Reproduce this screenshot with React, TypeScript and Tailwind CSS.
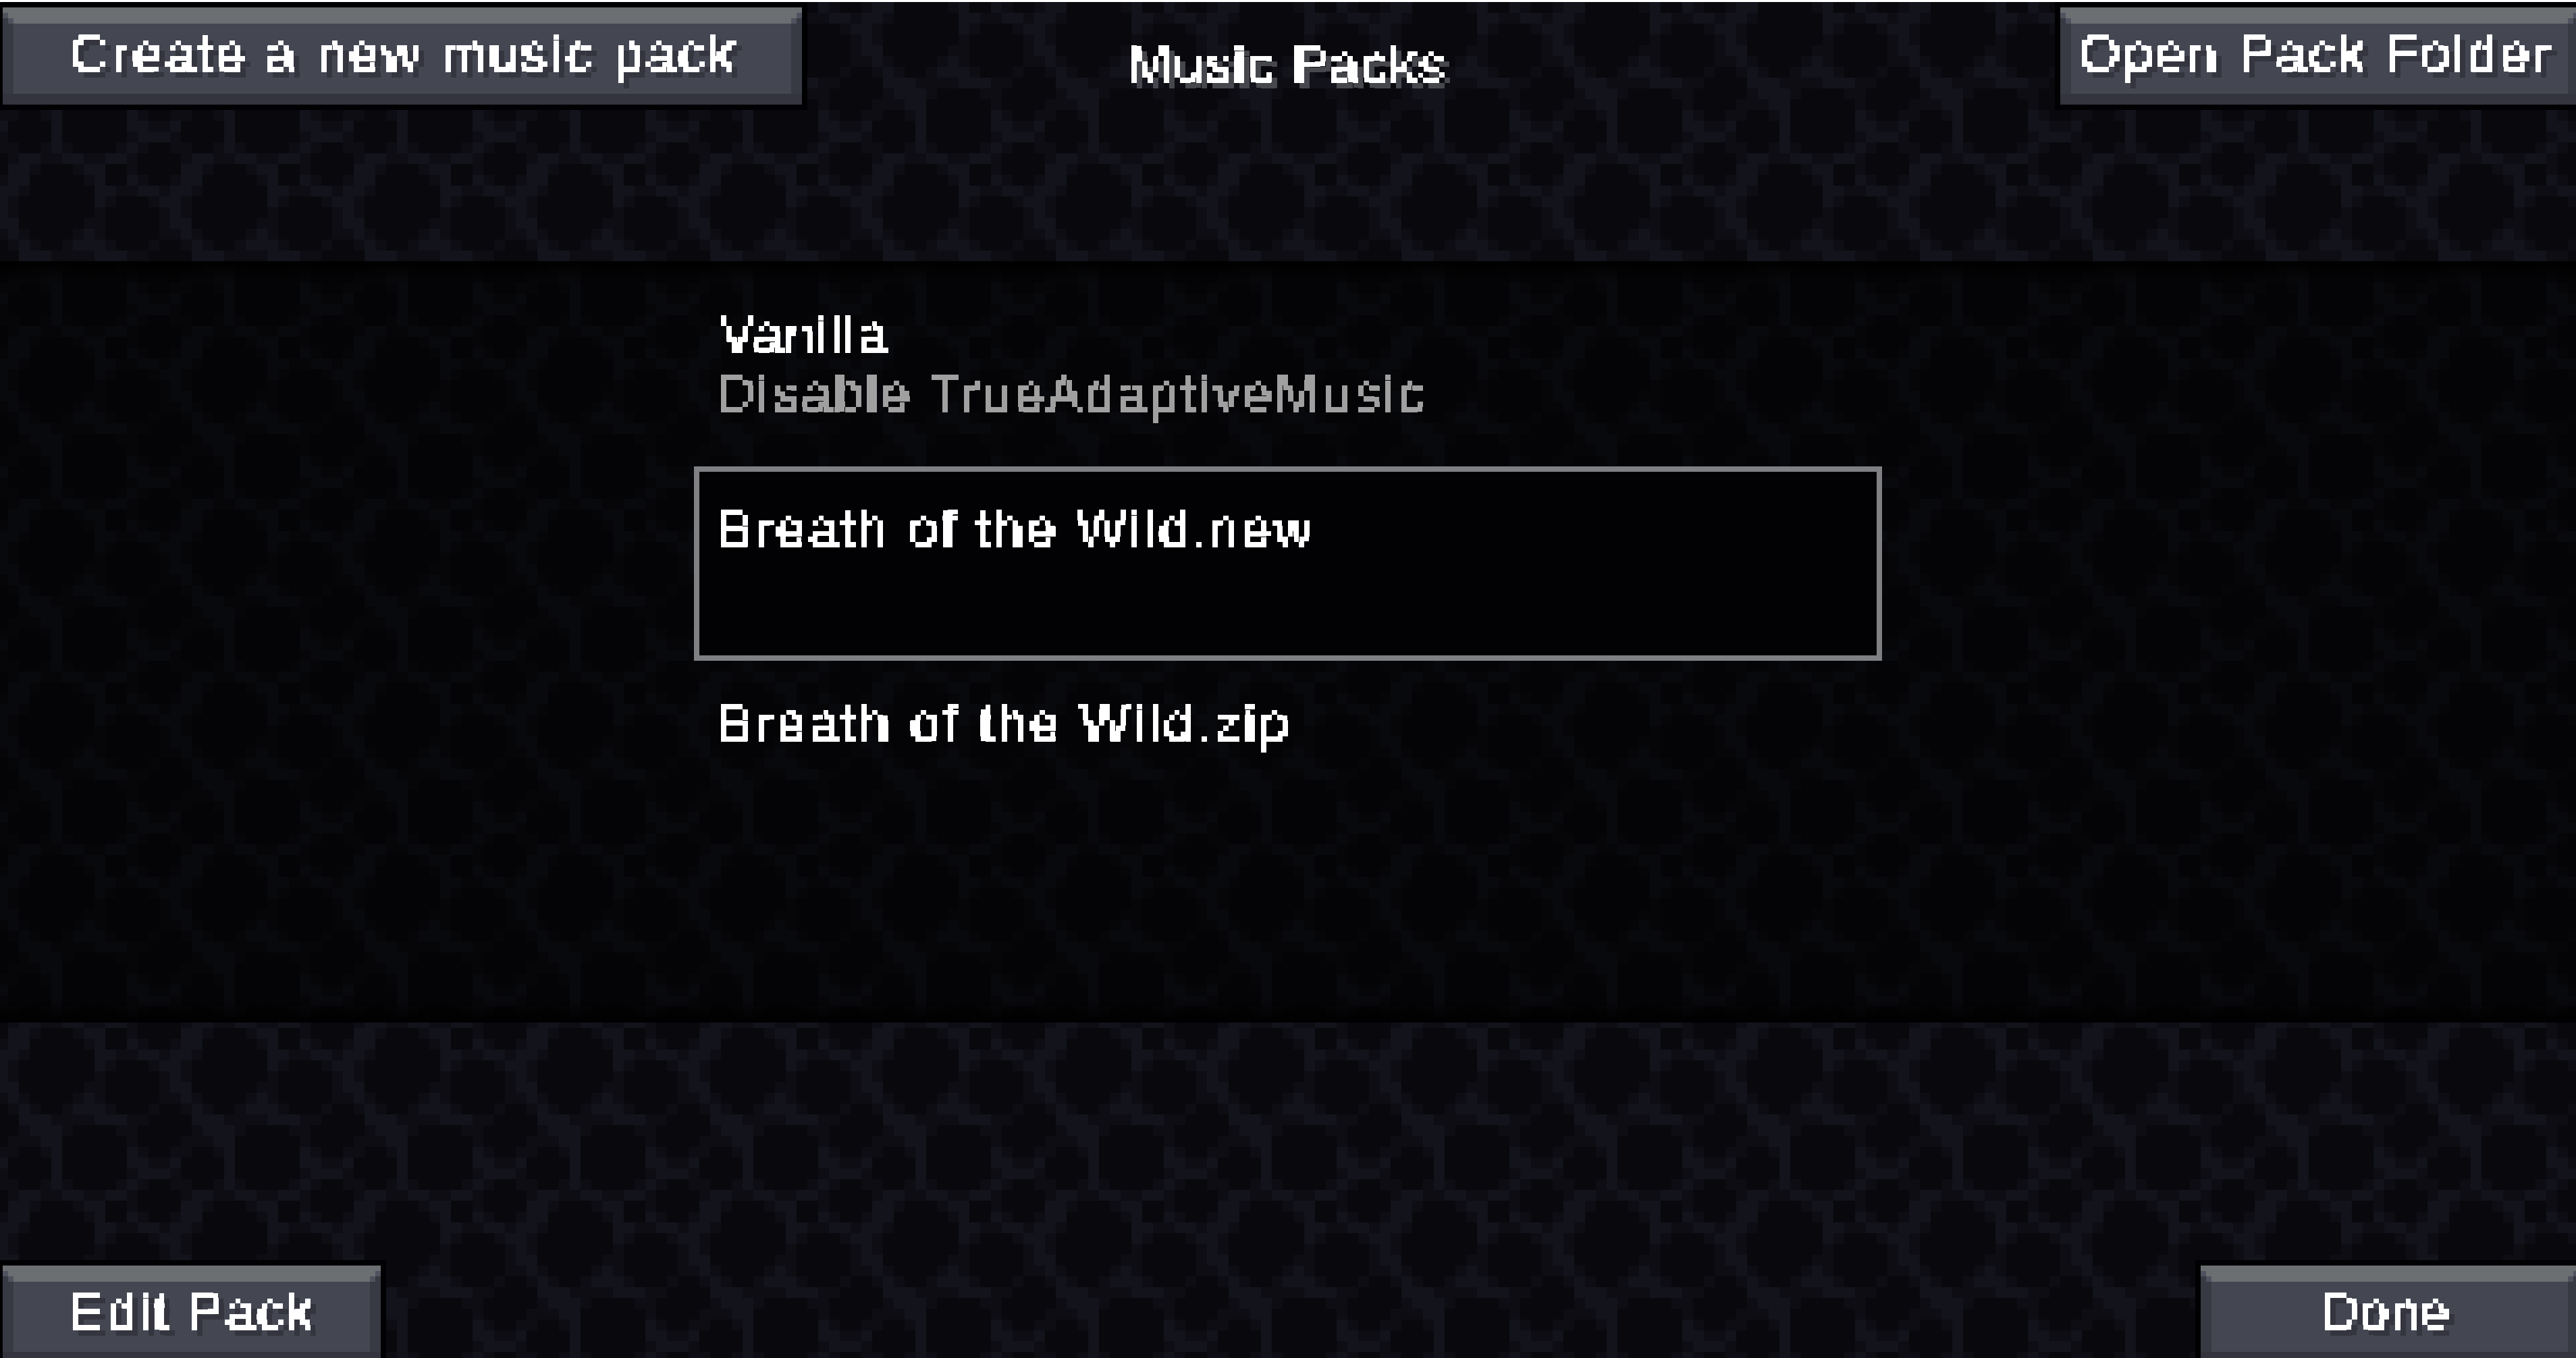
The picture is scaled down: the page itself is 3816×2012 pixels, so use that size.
import React from "react";

const TILE = [
  "MLLDDDDDMLDDLMDD",
  "LLMDDDDDDLLMMLLM",
  "LMDDDDDDDLMDDDML",
  "LMDDDDDDDMDDDDDM",
  "LLDDDDDDMMDDDDDM",
  "MLMDDDDMLMDDDDDM",
  "DMLMDDMLLLMDDDMD",
  "DDLLLMMMMLLLMMDD",
  "DDMLLLMDDDDMMDDD",
  "DMMMLLDDDDDDMDDD",
  "MMDDMLDDDDDDLMDD",
  "LDDDDLDDDDDDLLMM",
  "MDDDDLDDDDDDMLLL",
  "MMDDMLMDDDDMLMDD",
  "DMLLMMLLMMLLMDDD",
  "DLLMDDDMLLDDMDDD",
];

const SHADE: Record<string, string> = { D: "#08080d", M: "#0d0d13", L: "#12131b" };

function Backdrop() {
  return (
    <svg className="absolute inset-0 w-full h-full" shapeRendering="crispEdges" aria-hidden="true">
      <defs>
        <pattern id="stone" x="-4" y="3" width="256" height="256" patternUnits="userSpaceOnUse">
          {TILE.map((row, r) =>
            row.split("").map((c, k) => (
              <rect key={`${r}-${k}`} x={k * 16} y={r * 16} width="16" height="16" fill={SHADE[c]} />
            ))
          )}
        </pattern>
        <filter id="px" x="-2%" y="-2%" width="104%" height="104%" primitiveUnits="userSpaceOnUse" colorInterpolationFilters="sRGB">
          <feFlood x="3" y="3" width="2" height="2" floodColor="#000" />
          <feComposite width="8" height="8" />
          <feTile result="grid" />
          <feComposite in="SourceGraphic" in2="grid" operator="in" />
          <feMorphology operator="dilate" radius="3" />
          <feComponentTransfer>
            <feFuncA type="discrete" tableValues="0 0 1 1 1 1" />
          </feComponentTransfer>
        </filter>
      </defs>
      <rect width="100%" height="100%" fill="url(#stone)" />
    </svg>
  );
}

const FONT = "font-['Liberation_Sans',sans-serif] text-[78px] leading-[88px] whitespace-pre [-webkit-text-stroke:1px_currentColor]";

function Label({ text, className }: { text: string; className: string }) {
  return <div className={`${FONT} h-[88px] ${className}`}>{text}</div>;
}

function McButton({
  text,
  boxClass,
  labelClass,
}: {
  text: string;
  boxClass: string;
  labelClass: string;
}) {
  return (
    <div className={`relative shrink-0 h-[160px] border-8 border-[#010103] flex flex-col ${boxClass}`}>
      <div className="relative h-[24px] shrink-0 bg-[#6b6f72]">
        <span className="absolute left-0 top-[8px] w-[8px] h-[8px] bg-[#50535f]" />
        <span className="absolute left-0 top-[16px] w-[8px] h-[8px] bg-[#383a43]" />
        <span className="absolute left-[8px] top-[16px] w-[8px] h-[8px] bg-[#50535f]" />
        <span className="absolute right-0 top-[8px] w-[8px] h-[8px] bg-[#50535f]" />
        <span className="absolute right-0 top-[16px] w-[8px] h-[8px] bg-[#383a43]" />
        <span className="absolute right-[8px] top-[16px] w-[8px] h-[8px] bg-[#50535f]" />
      </div>
      <div className="flex-1 flex min-h-0">
        <div className="w-[16px] bg-[#383a43]" />
        <div className="flex-1 min-w-0 bg-[#444752]">
          <Label
            text={text}
            className={`text-white [filter:url(#px)_drop-shadow(8px_8px_0_#34353e)] ${labelClass}`}
          />
        </div>
        <div className="w-[16px] bg-[#383a43]" />
      </div>
      <div className="h-[16px] shrink-0 bg-[#33343d]" />
    </div>
  );
}

function ListItem({ selected, children }: { selected?: boolean; children: React.ReactNode }) {
  return (
    <div
      className={`w-[1760px] h-[288px] border-8 pt-[40px] pl-[32px] ${
        selected ? "border-[#7f8083] bg-[#020204]" : "border-transparent"
      }`}
    >
      {children}
    </div>
  );
}

const ROW = "text-white [filter:url(#px)]";

export default function App() {
  return (
    <div className="relative w-[3816px] h-[2012px] overflow-hidden bg-[#08080d]">
      <Backdrop />
      <div className="relative flex flex-col h-full">
        <div className="h-[3px] shrink-0 bg-white" />

        <header className="h-[384px] shrink-0 flex items-start -ml-[4px]">
          <McButton
            text="Create a new music pack"
            boxClass="w-[1200px]"
            labelClass="ml-[88px] tracking-[4.9px] [text-indent:-4px]"
          />
          <Label
            text="Music Packs"
            className="mt-[48px] ml-[480px] text-white tracking-[3.2px] [text-indent:-6px] [filter:url(#px)_drop-shadow(8px_8px_0_#45474d)]"
          />
          <McButton
            text="Open Pack Folder"
            boxClass="w-[784px] ml-auto -mr-[12px]"
            labelClass="ml-[16px] tracking-[4.6px] [text-indent:-4px]"
          />
        </header>

        <main className="h-[1128px] shrink-0 pt-[16px] pl-[1028px] bg-[linear-gradient(to_bottom,#000_0,rgba(0,0,0,0.55)_32px,rgba(0,0,0,0.55)_calc(100%-32px),#000_100%)]">
          <ListItem>
            <Label text="Vanilla" className={`${ROW} tracking-[3.3px] [text-indent:-2px]`} />
            <Label text="Disable TrueAdaptiveMusic" className="text-[#a0a0a0] [filter:url(#px)] tracking-[4.25px] [text-indent:-6px]" />
          </ListItem>
          <ListItem selected>
            <Label text="Breath of the Wild.new" className={`${ROW} tracking-[4.6px] [text-indent:-6px]`} />
          </ListItem>
          <ListItem>
            <Label text="Breath of the Wild.zip" className={`${ROW} tracking-[5px] [text-indent:-6px]`} />
          </ListItem>
        </main>

        <footer className="flex-1 min-h-0 pt-[352px] flex items-start -ml-[4px]">
          <McButton text="Edit Pack" boxClass="w-[576px]" labelClass="ml-[88px] tracking-[3.9px] [text-indent:-6px]" />
          <McButton
            text="Done"
            boxClass="w-[576px] ml-auto -mr-[12px]"
            labelClass="ml-[168px] tracking-[1.2px] [text-indent:-6px]"
          />
        </footer>
      </div>
    </div>
  );
}
